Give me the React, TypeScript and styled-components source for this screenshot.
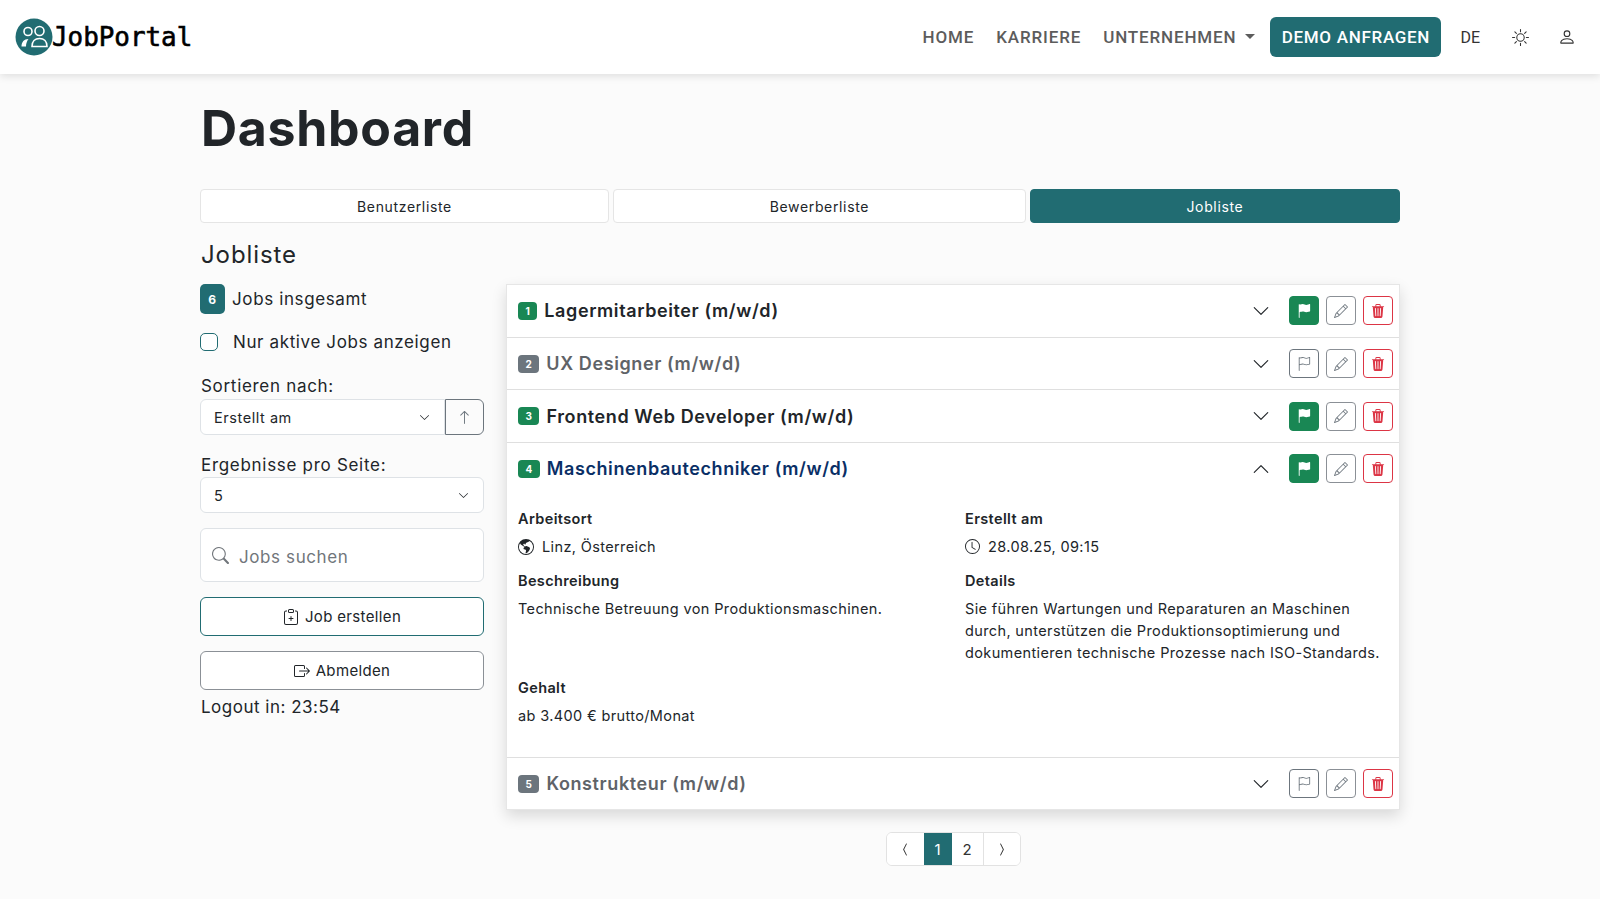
import styled, { createGlobalStyle } from "styled-components";
import {
  BsArrowUp,
  BsBoxArrowRight,
  BsChevronCompactLeft,
  BsChevronCompactRight,
  BsChevronDown,
  BsChevronUp,
  BsClipboardPlus,
  BsClock,
  BsFlag,
  BsFlagFill,
  BsGlobeAmericas,
  BsPencil,
  BsPerson,
  BsSearch,
  BsSun,
  BsTrash3Fill,
} from "react-icons/bs";

const teal = "#216c72";
const green = "#198754";
const sans = `Inter, "Noto Sans", "Liberation Sans", sans-serif`;

const jobs = [
  { id: 1, title: "Lagermitarbeiter (m/w/d)", active: true },
  { id: 2, title: "UX Designer (m/w/d)", active: false },
  { id: 3, title: "Frontend Web Developer (m/w/d)", active: true },
  { id: 4, title: "Maschinenbautechniker (m/w/d)", active: true, open: true },
  { id: 5, title: "Konstrukteur (m/w/d)", active: false },
];

function Logo() {
  return (
    <LogoMark>
      <svg width="38" height="38" viewBox="0 0 38 38">
        <circle cx="19" cy="19" r="18.5" fill={teal} />
        <g fill="none" stroke="#fff" strokeWidth="1.6">
          <circle cx="13" cy="13.5" r="4" />
          <circle cx="24.5" cy="13" r="4.5" />
          <path d="M17 28.500c0-5 3-8 7.500-8s7.500 3 7.500 8z" />
        </g>
        <path d="M6.500 28.500c0-4.500 2.500-7.500 7-7.500-1.500 2-2.500 4.500-2.500 7.500z" fill="#fff" />
      </svg>
    </LogoMark>
  );
}

function JobRow({ job }: { job: (typeof jobs)[number] }) {
  const tone = job.active ? green : "#6c757d";
  return (
    <RowHead>
      <Badge $bg={tone}>{job.id}</Badge>
      <JobTitle $color={job.open ? "#0a2f66" : job.active ? "#212529" : "#5f6368"}>{job.title}</JobTitle>
      <Toggle>{job.open ? <BsChevronUp size={18} /> : <BsChevronDown size={18} />}</Toggle>
      <Actions>
        {job.active ? (
          <IconButton $bg={green} $border={green} $color="#fff">
            <BsFlagFill size={14} />
          </IconButton>
        ) : (
          <IconButton $border="#6c757d" $color="#6c757d">
            <BsFlag size={14} />
          </IconButton>
        )}
        <IconButton $border="#8b9096" $color="#6c757d">
          <BsPencil size={14} />
        </IconButton>
        <IconButton $border="#dc3545" $color="#dc3545">
          <BsTrash3Fill size={14} />
        </IconButton>
      </Actions>
    </RowHead>
  );
}

function Details() {
  return (
    <DetailGrid>
      <DetailCell>
        <DetailLabel>Arbeitsort</DetailLabel>
        <DetailText>
          <BsGlobeAmericas size={16} />
          Linz, Österreich
        </DetailText>
      </DetailCell>
      <DetailCell>
        <DetailLabel>Erstellt am</DetailLabel>
        <DetailText>
          <BsClock size={15} />
          28.08.25, 09:15
        </DetailText>
      </DetailCell>
      <DetailCell>
        <DetailLabel>Beschreibung</DetailLabel>
        <DetailText>Technische Betreuung von Produktionsmaschinen.</DetailText>
      </DetailCell>
      <DetailCell>
        <DetailLabel>Details</DetailLabel>
        <DetailText>
          Sie führen Wartungen und Reparaturen an Maschinen durch, unterstützen die
          Produktionsoptimierung und dokumentieren technische Prozesse nach ISO-Standards.
        </DetailText>
      </DetailCell>
      <DetailCell>
        <DetailLabel>Gehalt</DetailLabel>
        <DetailText>ab 3.400 € brutto/Monat</DetailText>
      </DetailCell>
    </DetailGrid>
  );
}

export default function App() {
  return (
    <>
      <GlobalStyle />
      <Navbar>
        <Brand>
          <Logo />
          <BrandName>JobPortal</BrandName>
        </Brand>
        <NavList>
          <NavLink>HOME</NavLink>
          <NavLink>KARRIERE</NavLink>
          <NavLink>
            UNTERNEHMEN <Caret />
          </NavLink>
          <DemoButton>DEMO ANFRAGEN</DemoButton>
          <Lang>DE</Lang>
          <NavIcon>
            <BsSun size={17} />
          </NavIcon>
          <NavIcon>
            <BsPerson size={18} />
          </NavIcon>
        </NavList>
      </Navbar>
      <Main>
        <Heading>Dashboard</Heading>
        <Tabs>
          <Tab $grow={409}>Benutzerliste</Tab>
          <Tab $grow={413}>Bewerberliste</Tab>
          <Tab $grow={370} $active>
            Jobliste
          </Tab>
        </Tabs>
        <SubHeading>Jobliste</SubHeading>
        <Columns>
          <Sidebar>
            <TotalRow>
              <TotalBadge>6</TotalBadge>
              Jobs insgesamt
            </TotalRow>
            <CheckRow>
              <CheckBox />
              Nur aktive Jobs anzeigen
            </CheckRow>
            <FieldLabel>Sortieren nach:</FieldLabel>
            <SortGroup>
              <Select $joined>
                Erstellt am
                <BsChevronDown size={11} />
              </Select>
              <SortButton>
                <BsArrowUp size={15} />
              </SortButton>
            </SortGroup>
            <FieldLabel $top={18}>Ergebnisse pro Seite:</FieldLabel>
            <Select>
              5
              <BsChevronDown size={11} />
            </Select>
            <SearchBox>
              <BsSearch size={17} />
              <SearchText>Jobs suchen</SearchText>
            </SearchBox>
            <OutlineButton $border={teal}>
              <BsClipboardPlus size={16} />
              Job erstellen
            </OutlineButton>
            <OutlineButton $border="#8b9096">
              <BsBoxArrowRight size={16} />
              Abmelden
            </OutlineButton>
            <LogoutText>Logout in: 23:54</LogoutText>
          </Sidebar>
          <ListColumn>
            <Panel>
              {jobs.map((job) => (
                <JobItem key={job.id}>
                  <JobRow job={job} />
                  {job.open && <Details />}
                </JobItem>
              ))}
            </Panel>
            <Pagination>
              <PageItem $width={37}>
                <BsChevronCompactLeft size={15} />
              </PageItem>
              <PageItem $width={28} $active>
                1
              </PageItem>
              <PageItem $width={31}>2</PageItem>
              <PageItem $width={37} $divider>
                <BsChevronCompactRight size={15} />
              </PageItem>
            </Pagination>
          </ListColumn>
        </Columns>
      </Main>
    </>
  );
}

const GlobalStyle = createGlobalStyle`
  * {
    box-sizing: border-box;
  }
  html, body {
    margin: 0;
    height: 100%;
    overflow: hidden;
    background: #fbfbfb;
    color: #212529;
    font-family: ${sans};
  }
`;

const Navbar = styled.header`
  height: 74px;
  background: #fff;
  box-shadow: 0 2px 8px rgba(0, 0, 0, 0.12);
  display: flex;
  align-items: center;
  justify-content: space-between;
  padding: 0 24px 0 15px;
`;
const Brand = styled.div`
  display: flex;
  align-items: center;
`;
const LogoMark = styled.div`
  display: flex;
  width: 38px;
  height: 38px;
`;
const BrandName = styled.span`
  font-family: "DejaVu Sans Mono", monospace;
  font-size: 25.9px;
  font-weight: 400;
  color: #000;
  -webkit-text-stroke: 0.6px #000;
  margin-left: -1px;
`;
const NavList = styled.nav`
  display: flex;
  align-items: center;
`;
const NavLink = styled.a`
  font-family: Roboto, sans-serif;
  font-size: 17px;
  font-weight: 500;
  letter-spacing: 0.85px;
  color: #5c5c5c;
  margin-right: 22px;
  display: flex;
  align-items: center;
  gap: 9px;
  &:nth-child(3) {
    margin-right: 15px;
  }
`;
const Caret = styled.span`
  width: 0;
  height: 0;
  border-left: 5px solid transparent;
  border-right: 5px solid transparent;
  border-top: 5px solid #5c5c5c;
  margin-top: -2px;
`;
const DemoButton = styled.button`
  height: 40px;
  width: 171px;
  border: 0;
  border-radius: 6px;
  background: ${teal};
  color: #fff;
  font-family: Roboto, sans-serif;
  font-size: 17px;
  font-weight: 500;
  letter-spacing: 0.7px;
  padding: 0;
`;
const Lang = styled.span`
  font-family: Roboto, sans-serif;
  font-size: 16px;
  color: #333;
  margin-left: 19px;
`;
const NavIcon = styled.span`
  display: flex;
  color: #333;
  margin-left: 32px;
  &:last-child {
    margin-left: 29px;
  }
`;
const Main = styled.main`
  width: 1200px;
  margin: 0 auto;
`;
const Heading = styled.h1`
  margin: 24px 0 0 1px;
  font-size: 50px;
  line-height: 60px;
  font-weight: 700;
  letter-spacing: 0.7px;
`;
const Tabs = styled.div`
  display: flex;
  gap: 4px;
  margin-top: 31px;
`;
const Tab = styled.div<{ $grow: number; $active?: boolean }>`
  flex: ${(p) => p.$grow} 1 0;
  height: 34px;
  display: flex;
  align-items: center;
  justify-content: center;
  font-size: 14px;
  letter-spacing: 0.65px;
  border-radius: 4px;
  border: 1px solid ${(p) => (p.$active ? teal : "#e5e5e5")};
  background: ${(p) => (p.$active ? teal : "#fff")};
  color: ${(p) => (p.$active ? "#fff" : "#212529")};
`;
const SubHeading = styled.h2`
  margin: 16px 0 0 1px;
  font-size: 24px;
  line-height: 32px;
  font-weight: 400;
  letter-spacing: 0.9px;
`;
const Columns = styled.div`
  display: flex;
  margin-top: 13px;
`;
const Sidebar = styled.aside`
  width: 284px;
  flex-shrink: 0;
  display: flex;
  flex-direction: column;
  font-size: 17px;
`;
const TotalRow = styled.div`
  display: flex;
  align-items: center;
  gap: 7px;
  height: 30px;
  letter-spacing: 0.62px;
`;
const TotalBadge = styled.span`
  width: 25px;
  height: 30px;
  border-radius: 5px;
  background: ${teal};
  color: #fff;
  font-size: 12px;
  font-weight: 700;
  display: flex;
  align-items: center;
  justify-content: center;
`;
const CheckRow = styled.label`
  display: flex;
  align-items: center;
  gap: 15px;
  margin-top: 19px;
  height: 18px;
  letter-spacing: 0.62px;
`;
const CheckBox = styled.span`
  width: 18px;
  height: 18px;
  border-radius: 5px;
  border: 1px solid ${teal};
  background: #fff;
`;
const FieldLabel = styled.div<{ $top?: number }>`
  margin-top: ${(p) => p.$top ?? 23}px;
  margin-left: 1px;
  line-height: 24px;
  height: 24px;
  letter-spacing: 0.7px;
`;
const SortGroup = styled.div`
  display: flex;
  margin-top: 1px;
`;
const Select = styled.div<{ $joined?: boolean }>`
  flex: ${(p) => (p.$joined ? "1" : "none")};
  height: 36px;
  display: flex;
  align-items: center;
  justify-content: space-between;
  padding: 0 14px 0 13px;
  background: #fff;
  font-size: 14.5px;
  letter-spacing: 0.55px;
  border: 1px solid #dee2e6;
  border-radius: ${(p) => (p.$joined ? "6px 0 0 6px" : "6px")};
`;
const SortButton = styled.button`
  width: 39px;
  height: 36px;
  padding: 0;
  display: flex;
  align-items: center;
  justify-content: center;
  background: transparent;
  color: #6c757d;
  border: 1px solid #6c757d;
  border-radius: 0 6px 6px 0;
`;
const SearchBox = styled.div`
  height: 54px;
  margin-top: 15px;
  display: flex;
  align-items: center;
  gap: 10px;
  padding: 0 11px;
  background: #fff;
  color: #71767b;
  border: 1px solid #dee2e6;
  border-radius: 6px;
  letter-spacing: 0.6px;
`;
const SearchText = styled.span`
  margin-top: 3px;
`;
const OutlineButton = styled.button<{ $border: string }>`
  height: 39px;
  margin-top: 15px;
  display: flex;
  align-items: center;
  justify-content: center;
  gap: 6px;
  background: #fff;
  color: #212529;
  font-family: ${sans};
  font-size: 15px;
  letter-spacing: 0.35px;
  border: 1px solid ${(p) => p.$border};
  border-radius: 6px;
`;
const LogoutText = styled.div`
  margin-top: 5px;
  margin-left: 1px;
  line-height: 24px;
  letter-spacing: 0.5px;
`;
const ListColumn = styled.div`
  flex: 1;
  margin-left: 22px;
  display: flex;
  flex-direction: column;
  align-items: center;
`;
const Panel = styled.section`
  width: 100%;
  background: #fff;
  border: 1px solid #e6e6e6;
  box-shadow: 0 6px 14px rgba(0, 0, 0, 0.14);
`;
const JobItem = styled.article`
  & + & {
    border-top: 1px solid #dfdfdf;
  }
`;
const RowHead = styled.div`
  height: 51.7px;
  display: flex;
  align-items: center;
  padding: 0 6px 0 11px;
`;
const Badge = styled.span<{ $bg: string }>`
  height: 18px;
  padding: 0 7.5px;
  border-radius: 4px;
  background: ${(p) => p.$bg};
  color: #fff;
  font-size: 10px;
  font-weight: 700;
  display: flex;
  align-items: center;
  justify-content: center;
`;
const JobTitle = styled.h3<{ $color: string }>`
  margin: 0 0 0 7px;
  flex: 1;
  font-size: 18px;
  font-weight: 600;
  letter-spacing: 0.6px;
  color: ${(p) => p.$color};
`;
const Toggle = styled.span`
  display: flex;
  color: #212529;
  margin-right: 19px;
`;
const Actions = styled.div`
  display: flex;
  gap: 7px;
`;
const IconButton = styled.button<{ $bg?: string; $border: string; $color: string }>`
  width: 30px;
  height: 29px;
  padding: 0;
  display: flex;
  align-items: center;
  justify-content: center;
  background: ${(p) => p.$bg ?? "#fff"};
  color: ${(p) => p.$color};
  border: 1px solid ${(p) => p.$border};
  border-radius: 4px;
`;
const DetailGrid = styled.div`
  display: grid;
  grid-template-columns: 447px 1fr;
  padding: 13px 11px 18px;
  font-size: 14.5px;
  line-height: 22px;
  letter-spacing: 0.37px;
`;
const DetailCell = styled.div`
  padding-bottom: 12px;
  &:nth-child(3),
  &:nth-child(4) {
    padding-bottom: 13px;
  }
`;
const DetailLabel = styled.div`
  font-weight: 600;
  margin-bottom: 6px;
`;
const DetailText = styled.div`
  display: flex;
  gap: 8px;
  align-items: center;
  svg {
    flex-shrink: 0;
  }
`;
const Pagination = styled.nav`
  display: flex;
  margin-top: 22px;
  height: 34px;
  border: 1px solid #e2e2e2;
  border-radius: 6px;
  background: #fff;
  overflow: hidden;
`;
const PageItem = styled.span<{ $width: number; $active?: boolean; $divider?: boolean }>`
  width: ${(p) => p.$width}px;
  display: flex;
  align-items: center;
  justify-content: center;
  font-size: 15px;
  background: ${(p) => (p.$active ? teal : "#fff")};
  color: ${(p) => (p.$active ? "#fff" : "#333")};
  border-left: ${(p) => (p.$divider ? "1px solid #e2e2e2" : "0")};
`;
